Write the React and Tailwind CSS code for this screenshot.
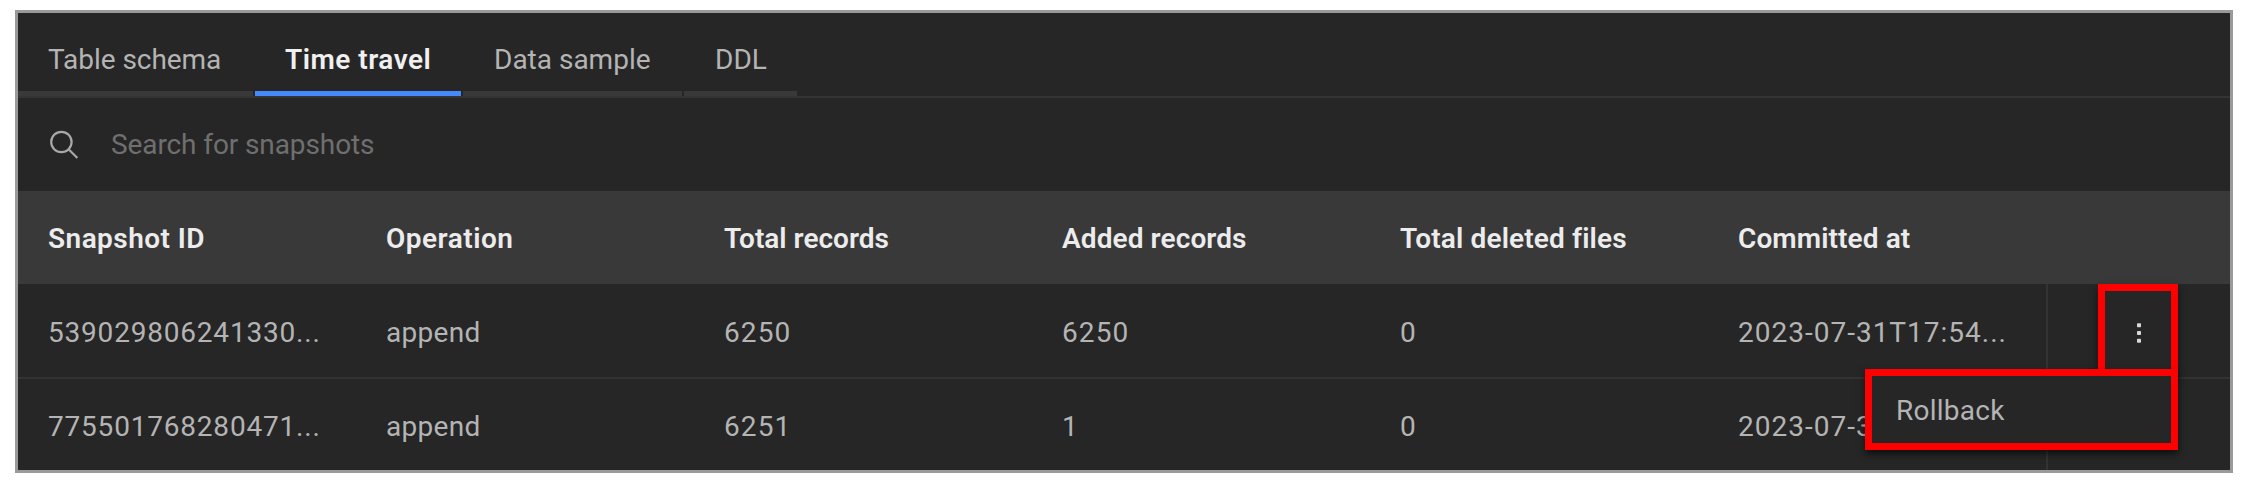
const columns = [
  { key: "id", label: "Snapshot ID", track: "tracking-[0.45px]", cellTrack: "tracking-[0.8px]" },
  { key: "op", label: "Operation", track: "tracking-[0.5px]", cellTrack: "tracking-[0.3px]" },
  { key: "total", label: "Total records", track: "tracking-[0px]", cellTrack: "tracking-[1.1px]" },
  { key: "added", label: "Added records", track: "tracking-[0.1px]", cellTrack: "tracking-[1.1px]" },
  { key: "deleted", label: "Total deleted files", track: "tracking-[0.15px]", cellTrack: "tracking-[1.1px]" },
  { key: "at", label: "Committed at", track: "tracking-[0.1px]", cellTrack: "tracking-[1px]" },
];

const rows = [
  { id: "539029806241330...", op: "append", total: "6250", added: "6250", deleted: "0", at: "2023-07-31T17:54..." },
  { id: "775501768280471...", op: "append", total: "6251", added: "1", deleted: "0", at: "2023-07-3" },
];

function Tab({ label, className }) {
  return (
    <button className={`flex h-[83px] shrink-0 items-start border-b-[5px] pt-[31px] leading-[32px] ${className}`}>
      {label}
    </button>
  );
}

function SearchIcon() {
  return (
    <svg className="size-8" viewBox="0 0 32 32" fill="none" stroke="#a8a8a8" strokeWidth="2.2">
      <circle cx="13.4" cy="13" r="10.2" />
      <path d="M20.6 20.2 29.4 29" />
    </svg>
  );
}

function Kebab() {
  return (
    <svg className="h-[20px] w-[6px]" viewBox="0 0 6 20" fill="#d8d8d8">
      <rect x="1" y="0.2" width="4" height="4" rx="0.8" />
      <rect x="1" y="8" width="4" height="4" rx="0.8" />
      <rect x="1" y="15.8" width="4" height="4" rx="0.8" />
    </svg>
  );
}

export default function App() {
  return (
    <div className="h-[486px] w-[2250px] bg-white pl-[15px] pt-[10px] font-['Roboto',sans-serif] text-[28px] leading-[32px] text-[#b4b4b4]">
      <div className="relative h-[463px] w-[2218px] overflow-hidden border-[3px] border-[#9a9a9a] bg-[#262626]">
        <nav className="flex h-[85px] border-b-2 border-[#343434]">
          <Tab label="Table schema" className="w-[235px] border-[#393939] pl-[30px] tracking-[-0.05px]" />
          <span className="w-[2px] shrink-0" />
          <Tab label="Time travel" className="w-[206px] border-[#4589ff] pl-[30px] font-semibold tracking-[0.5px] text-[#f0f0f0]" />
          <span className="w-[2px] shrink-0" />
          <Tab label="Data sample" className="w-[219px] border-[#393939] pl-[31px]" />
          <span className="w-[2px] shrink-0" />
          <Tab label="DDL" className="w-[113px] border-[#393939] pl-[31px]" />
        </nav>

        <div className="flex h-[93px] items-start pl-[30px] pt-[31px] text-[#6f6f6f]">
          <SearchIcon />
          <span className="pl-[31px] tracking-[-0.1px]">Search for snapshots</span>
        </div>

        <div className="flex h-[93px] bg-[#393939] pt-[32px] font-semibold text-[#ececec]">
          {columns.map((c) => (
            <div key={c.key} className={`w-[338px] shrink-0 pl-[30px] ${c.track}`}>{c.label}</div>
          ))}
        </div>

        {rows.map((r, i) => (
          <div key={r.id} className={`flex border-b-2 border-[#333333] ${i === 0 ? "h-[95px]" : "h-[94px]"}`}>
            {columns.map((c) => (
              <div
                key={c.key}
                className={`w-[338px] shrink-0 whitespace-nowrap pl-[30px] ${i === 0 ? "pt-[33px]" : "pt-[32px]"} ${c.cellTrack}`}
              >
                {r[c.key]}
              </div>
            ))}
            <div className="flex flex-1 border-l-2 border-[#333333] pl-[88px] pt-[39px]">{i === 0 && <Kebab />}</div>
          </div>
        ))}

        <div className="absolute left-[2080px] top-[271px] h-[92px] w-[80px] border-[7px] border-[#ff0000] shadow-[0_4px_7px_rgba(0,0,0,0.5)]" />
        <div className="absolute left-[1847px] top-[356px] h-[81px] w-[313px] border-[7px] border-[#ff0000] bg-[#262626] pl-[24px] pt-[19px] tracking-[0.25px] shadow-[0_4px_7px_rgba(0,0,0,0.6)]">
          Rollback
        </div>
      </div>
    </div>
  );
}
